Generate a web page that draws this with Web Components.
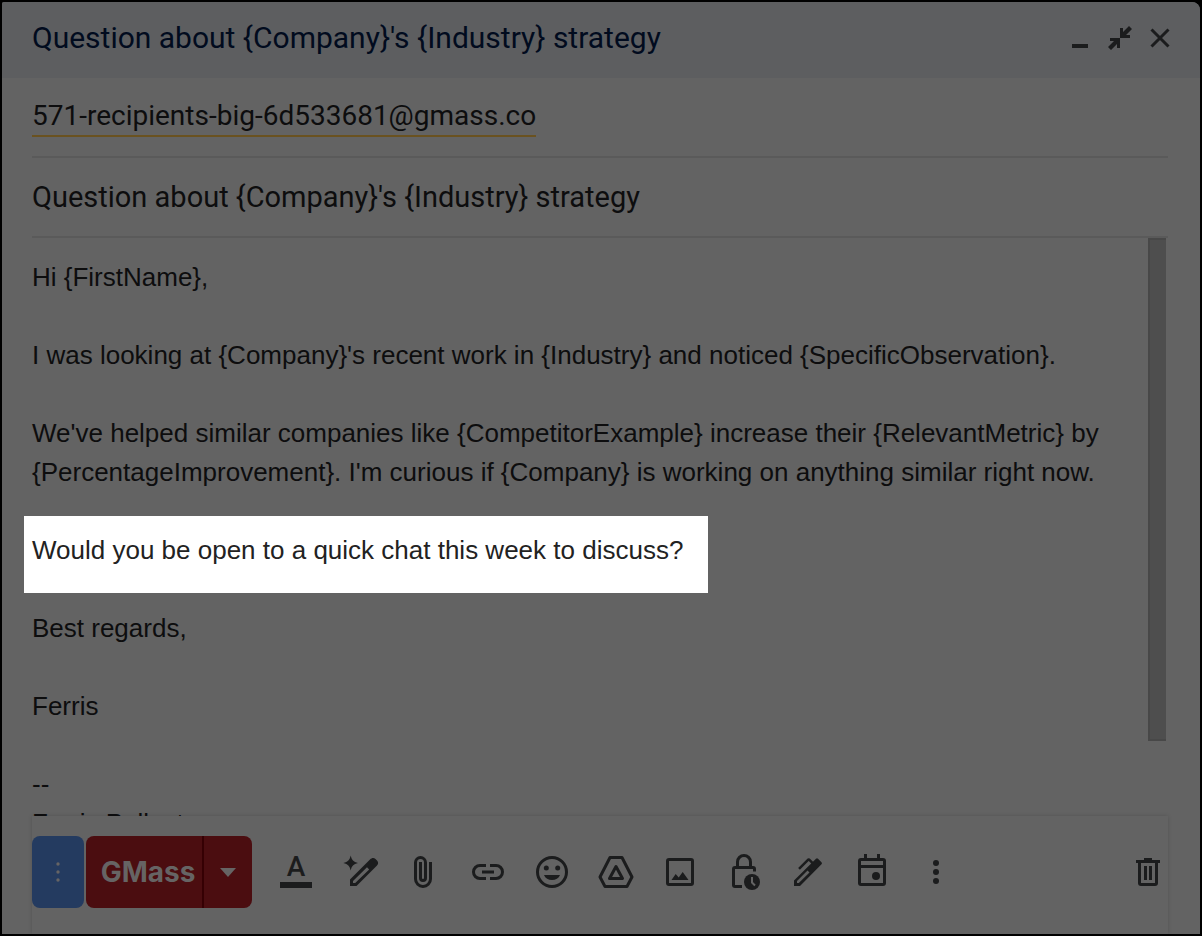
<!DOCTYPE html>
<html lang="en">
<head>
<meta charset="utf-8">
<meta name="viewport" content="width=device-width, initial-scale=1">
<title>Compose</title>
<style>
  :root {
    --surface: #636363;
    --bar: #5d5e60;
    --line: #5a5a5a;
    --ink: #0d0d0e;
    --icon: #1b1c1d;
    --ui-font: Roboto, "Open Sans", sans-serif;
    --body-font: "Liberation Sans", Arial, sans-serif;
  }
  body {
    margin: 0;
    background: #000;
    color: var(--ink);
    font-family: var(--body-font);
  }
</style>
</head>
<body>
<compose-window>
  <compose-header slot="header">Question about {Company}'s {Industry} strategy</compose-header>
  <compose-recipients slot="fields">571-recipients-big-6d533681@gmass.co</compose-recipients>
  <compose-subject slot="fields" value="Question about {Company}'s {Industry} strategy"></compose-subject>
  <compose-body>
    <p>Hi {FirstName},</p>
    <p>I was looking at {Company}'s recent work in {Industry} and noticed {SpecificObservation}.</p>
    <p>We've helped similar companies like {CompetitorExample} increase their {RelevantMetric} by {PercentageImprovement}. I'm curious if {Company} is working on anything similar right now.</p>
    <p class="spotlight">Would you be open to a quick chat this week to discuss?</p>
    <p>Best regards,</p>
    <p>Ferris</p>
    <p>--<br>Ferris Pollest</p>
  </compose-body>
  <compose-toolbar slot="footer"></compose-toolbar>
</compose-window>

<script>
const ICONS = {
  minimize: '<path d="M12 26h16v4H12z"/>',
  collapse: '<path d="M20 10h3v4l6-6 3 3-6 6h4v3H20zM20 30h-3v-4l-6 6-3-3 6-6h-4v-3h10z"/>',
  close: '<path class="line" d="M11.5 11.5l17 17M28.5 11.5l-17 17"/>',
  magic: '<path d="M10.7 3.5c1 4.5 2.8 6.5 7.3 7.5-4.5 1-6.3 3-7.3 7.5-1-4.500-2.8-6.5-7.3-7.5 4.5-1 6.3-3 7.3-7.5z"/><path fill-rule="evenodd" d="M10 34v-6.5L30 7.5c2-2 4-2 5.5-.5l1.5 1.5c1.5 1.5 1.5 3.5 0 5L16.5 34zM13 31h2.2l14-13.5-2.2-2.2L13 29z"/>',
  attach: '<path class="line" d="M26.5 10v17a7.5 7.5 0 0 1-15 0V10.5a5 5 0 0 1 10 0V26a2.5 2.5 0 0 1-5 0V10"/>',
  link: '<path class="line" d="M18 13.5h-6a6.5 6.5 0 0 0 0 13h6M22 13.5h6a6.5 6.5 0 0 1 0 13h-6M14 20h12"/>',
  emoji: '<circle class="line" cx="20" cy="20" r="14.5"/><circle cx="14.3" cy="16" r="2.5"/><circle cx="25.7" cy="16" r="2.5"/><path d="M12 23h16c-1.3 3.3-4.3 5-8 5s-6.7-1.7-8-5z"/>',
  drive: '<path class="line round" d="M14 5.5h12L36 25l-5 9.5H9L4 25z"/><path class="line round" d="M20 14.5l6.5 12h-13z"/>',
  image: '<rect class="line" x="7.5" y="7.5" width="25" height="25" rx="1.5"/><path d="M11.5 28l4.2-6 3 3.5 4-5.5 5.8 8z"/>',
  lock: '<path class="line" d="M18 34.5h-7a1.5 1.5 0 0 1-1.5-1.5V17a1.5 1.5 0 0 1 1.5-1.5h18a1.5 1.5 0 0 1 1.5 1.5v2.5M13.5 15V10a6.5 6.5 0 0 1 13 0v5"/><circle cx="28" cy="30" r="8"/><path d="M28 25v5.5l3 3" fill="none" stroke="#636363" stroke-width="2"/>',
  pen: '<path fill-rule="evenodd" d="M6 34v-5.5L28 6.7q1-1 2 0l3.500 3.5q1 1 0 2L12 34zM9 31h1.8L21.5 20.5l-2-2L9 29z"/><path class="line thin" d="M11 16.8L19.5 8.3q1.2-1.2 2.4 0l3 3"/>',
  calendar: '<rect class="line" x="7.5" y="7.5" width="25" height="25" rx="1.5"/><path d="M7 13h26v3H7zM12 2h3v5h-3zM25 2h3v5h-3z"/><circle cx="24" cy="24" r="4"/>',
  more: '<circle cx="20" cy="11" r="3"/><circle cx="20" cy="20" r="3"/><circle cx="20" cy="29" r="3"/>',
  trash: '<path d="M8 8h8V6h8v2h8v3H8zM16 14h3v14h-3zM21 14h3v14h-3z"/><path class="line" d="M11.5 10v21a1.5 1.5 0 0 0 1.5 1.5h14a1.5 1.5 0 0 0 1.5-1.5V10"/>',
};

class ComposeElement extends HTMLElement {
  constructor() {
    super();
    this.attachShadow({ mode: 'open' });
  }

  connectedCallback() {
    this.shadowRoot.innerHTML = this.template();
  }
}

class ComposeWindow extends ComposeElement {
  template() {
    return `
      <style>
        :host {
          display: flex;
          flex-direction: column;
          box-sizing: border-box;
          height: 100vh;
          border: 2px solid #000;
          border-radius: 4px 10px 0 0;
          background: var(--surface);
          overflow: hidden;
        }
        .fields {
          padding: 0 32px 0 30px;
        }
      </style>
      <slot name="header"></slot>
      <div class="fields"><slot name="fields"></slot></div>
      <slot></slot>
      <slot name="footer"></slot>
    `;
  }
}

class IconButton extends ComposeElement {
  template() {
    return `
      <style>
        :host {
          display: inline-flex;
        }
        button {
          display: flex;
          align-items: center;
          justify-content: center;
          width: var(--button-width, 40px);
          height: 40px;
          padding: 0;
          border: 0;
          background: none;
          cursor: pointer;
        }
        svg {
          width: 40px;
          height: 40px;
          fill: var(--icon);
        }
        .line {
          fill: none;
          stroke: var(--icon);
          stroke-width: 3;
        }
        .thin {
          stroke-width: 2.5;
        }
        .round {
          stroke-linejoin: round;
        }
      </style>
      <button type="button" aria-label="${this.getAttribute('label')}">
        <svg viewBox="0 0 40 40" aria-hidden="true">${ICONS[this.getAttribute('icon')]}</svg>
      </button>
    `;
  }
}

class ComposeHeader extends ComposeElement {
  template() {
    return `
      <style>
        :host {
          display: flex;
          align-items: center;
          flex: none;
          height: 76px;
          padding: 0 20px 0 30px;
          background: var(--bar);
        }
        h1 {
          flex: 1;
          margin: 0;
          padding-bottom: 4px;
          color: #010b1e;
          font: 400 30px/40px var(--ui-font);
        }
        nav {
          display: flex;
          padding-bottom: 4px;
        }
      </style>
      <h1><slot></slot></h1>
      <nav>
        <icon-button icon="minimize" label="Minimize"></icon-button>
        <icon-button icon="collapse" label="Exit full screen"></icon-button>
        <icon-button icon="close" label="Save and close"></icon-button>
      </nav>
    `;
  }
}

class ComposeRecipients extends ComposeElement {
  template() {
    return `
      <style>
        :host {
          display: flex;
          align-items: center;
          height: 78px;
          border-bottom: 2px solid var(--line);
        }
        span {
          border-bottom: 2px solid #6a5220;
          font: 28px/38px var(--ui-font);
        }
      </style>
      <span><slot></slot></span>
    `;
  }
}

class ComposeSubject extends ComposeElement {
  template() {
    return `
      <style>
        :host {
          display: flex;
          height: 78px;
          border-bottom: 2px solid var(--line);
        }
        input {
          flex: 1;
          min-width: 0;
          padding: 0;
          border: 0;
          outline: 0;
          background: none;
          color: inherit;
          font: 29px/38px var(--ui-font);
        }
      </style>
      <input type="text" aria-label="Subject" value="${this.getAttribute('value')}">
    `;
  }
}

class ComposeBody extends ComposeElement {
  template() {
    return `
      <style>
        :host {
          display: flex;
          flex: 1;
          min-height: 0;
          padding-right: 34px;
          overflow: hidden;
        }
        .text {
          flex: 1;
          padding: 20px 40px 0 30px;
          font-size: 26px;
          line-height: 39px;
        }
        ::slotted(p) {
          margin: 0 0 39px;
        }
        /* the call to action stands out from the dimmed message */
        ::slotted(.spotlight) {
          width: fit-content;
          margin: -15px 0 16px -8px;
          padding: 15px 25px 23px 8px;
          background: #fff;
          color: #222;
        }
        .track {
          flex: none;
          width: 18px;
        }
        .thumb {
          box-sizing: border-box;
          height: 87%;
          border: solid #484848;
          border-width: 2px 0 2px 2px;
          background: #4e4e4e;
        }
      </style>
      <div class="text"><slot></slot></div>
      <div class="track"><div class="thumb"></div></div>
    `;
  }
}

class SendButton extends ComposeElement {
  template() {
    return `
      <style>
        :host {
          display: flex;
          gap: 2px;
          height: 72px;
        }
        button {
          display: flex;
          align-items: center;
          justify-content: center;
          padding: 0;
          border: 0;
          background: #4b0d10;
          color: #666464;
          cursor: pointer;
        }
        .settings {
          width: 52px;
          border-radius: 8px;
          background: #243b60;
        }
        .group {
          display: flex;
        }
        .send {
          width: 116px;
          padding-left: 8px;
          border-radius: 8px 0 0 8px;
          font: 700 28px/36px Inter, sans-serif;
        }
        .options {
          width: 50px;
          border-left: 2px solid #350003;
          border-radius: 0 8px 8px 0;
        }
        svg {
          fill: #666464;
        }
      </style>
      <button class="settings" type="button" aria-label="Settings">
        <svg width="4" height="20" viewBox="0 0 4 20"><circle cx="2" cy="2" r="1.7"/><circle cx="2" cy="10" r="1.7"/><circle cx="2" cy="18" r="1.7"/></svg>
      </button>
      <div class="group">
        <button class="send" type="button">GMass</button>
        <button class="options" type="button" aria-label="Send options">
          <svg width="16" height="9" viewBox="0 0 16 9"><path d="M0 0h16L8 9z"/></svg>
        </button>
      </div>
    `;
  }
}

class ComposeToolbar extends ComposeElement {
  template() {
    return `
      <style>
        :host {
          display: flex;
          align-items: center;
          flex: none;
          box-sizing: border-box;
          height: 118px;
          margin: 0 32px 0 30px;
          padding-bottom: 6px;
          background: var(--surface);
          box-shadow: 0 0 4px rgba(0, 0, 0, .16);
        }
        .tools {
          --button-width: 64px;
          display: flex;
          flex: 1;
          padding-left: 12px;
        }
        .format {
          display: flex;
          align-items: flex-start;
          justify-content: center;
          width: 64px;
          height: 40px;
          padding: 0;
          border: 0;
          background: none;
          color: var(--icon);
          font: 500 28px/30px var(--ui-font);
          cursor: pointer;
        }
        .format span {
          width: 32px;
          border-bottom: 6px solid var(--icon);
        }
      </style>
      <send-button></send-button>
      <div class="tools">
        <button class="format" type="button" aria-label="Formatting options"><span>A</span></button>
        <icon-button icon="magic" label="Help me write"></icon-button>
        <icon-button icon="attach" label="Attach files"></icon-button>
        <icon-button icon="link" label="Insert link"></icon-button>
        <icon-button icon="emoji" label="Insert emoji"></icon-button>
        <icon-button icon="drive" label="Insert files using Drive"></icon-button>
        <icon-button icon="image" label="Insert photo"></icon-button>
        <icon-button icon="lock" label="Toggle confidential mode"></icon-button>
        <icon-button icon="pen" label="Insert signature"></icon-button>
        <icon-button icon="calendar" label="Set up a time to meet"></icon-button>
        <icon-button icon="more" label="More options"></icon-button>
      </div>
      <icon-button icon="trash" label="Discard draft"></icon-button>
    `;
  }
}

customElements.define('icon-button', IconButton);
customElements.define('send-button', SendButton);
customElements.define('compose-header', ComposeHeader);
customElements.define('compose-recipients', ComposeRecipients);
customElements.define('compose-subject', ComposeSubject);
customElements.define('compose-body', ComposeBody);
customElements.define('compose-toolbar', ComposeToolbar);
customElements.define('compose-window', ComposeWindow);
</script>
</body>
</html>
